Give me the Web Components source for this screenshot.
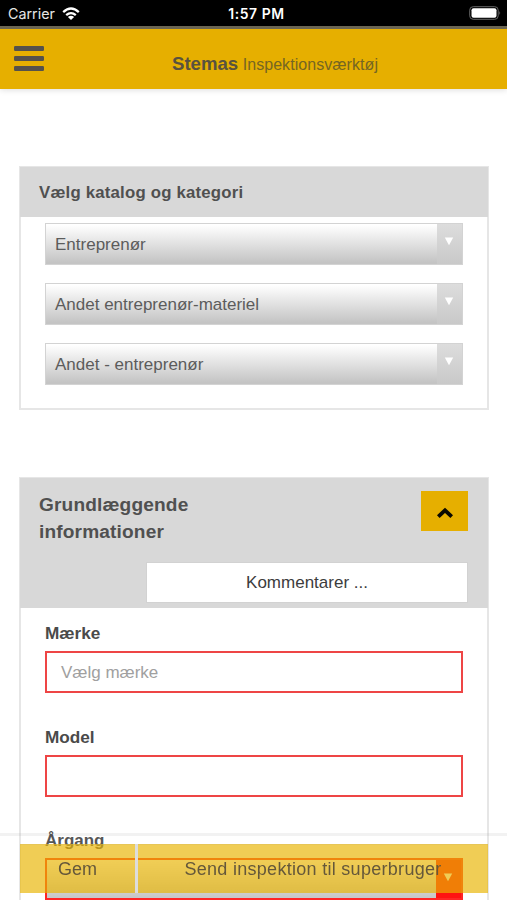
<!DOCTYPE html>
<html lang="da">
<head>
<meta charset="utf-8">
<title>Stemas Inspektionsværktøj</title>
<style>
html,body{margin:0;height:900px;overflow:hidden;background:#fff}
body{font-family:"Liberation Sans",Arial,sans-serif;color:#505050}
</style>
</head>
<body>
<inspection-app></inspection-app>
<script>
const define = (name, html) => customElements.define(name, class extends HTMLElement {
  constructor() {
    super();
    const t = document.createElement('template');
    t.innerHTML = html;
    this.attachShadow({ mode: 'open' }).append(t.content.cloneNode(true));
  }
});

define('status-bar', `<style>
:host{display:grid;grid-template-columns:1fr auto 1fr;align-items:center;height:26px;padding:2px 6px 0 8px;box-sizing:border-box;background:#000;color:#fff;font-size:14.300px;font-family:Inter,sans-serif;line-height:24px}
.l{display:flex;align-items:center;gap:7px;color:#e6e6e6}
b{font-weight:600;font-size:13.900px;letter-spacing:.6px;margin-left:4px}
.r{justify-self:end;display:flex}
svg{display:block}
.l svg{margin-top:-1px}
.r svg{margin-top:-2px}
</style>
<div class="l"><span>Carrier</span><svg width="18" height="14" viewBox="0 0 18 14" fill="none" stroke="#fff" stroke-width="2.3"><path d="M1.2 5.1Q9-2 16.800 5.100M4.200 8.200Q9 4 13.800 8.200"/><path d="M9 13 5.900 10Q9 7.600 12.100 10Z" fill="#fff" stroke="none"/></svg></div>
<b>1:57 PM</b>
<div class="r"><svg width="32" height="14" viewBox="0 0 32 14"><rect x=".7" y=".7" width="28.500" height="12.600" rx="3.500" fill="none" stroke="#666"/><rect x="2.500" y="2.300" width="25" height="9.400" rx="2" fill="#fff"/><path d="M30.500 5q1.400 2 0 4Z" fill="#888"/></svg></div>`);

define('app-header', `<style>
:host{display:flex;box-sizing:border-box;height:63px;border-top:3px solid #6b6552;background:#e6af00;box-shadow:0 1px 6px #0002;padding-left:14px;color:#5b5443}
svg{display:block;margin-top:17px}
.t{margin:24px 0 0 128px;line-height:22px;font-size:16px;white-space:nowrap;color:#756623;letter-spacing:.06px}
b{font-size:18.600px;color:#59523f;letter-spacing:0}
</style>
<svg width="30" height="26" fill="#55514b"><rect y="0" width="30" height="5" rx="1.200"/><rect y="10" width="30" height="5" rx="1.200"/><rect y="20" width="30" height="5" rx="1.200"/></svg>
<div class="t"><b><slot name="brand"></slot></b> <slot></slot></div>`);

define('form-panel', `<style>
:host{display:block;box-sizing:border-box;border:2px solid #e6e6e6;border-top-width:1px;margin:0 18px 0 19px}
header{display:block;background:#d8d8d8;margin:0 -1px}
</style>
<header><slot name="head"></slot></header><slot></slot>`);

define('select-box', `<style>
:host{display:flex;box-sizing:border-box;height:42px;border:1px solid #d3d3d3;background:linear-gradient(#fff 2%,#f4f4f4 20%,#c4c4c4 96%);font-size:17px;line-height:41px;color:#5c5c5c;--arrow:linear-gradient(#ddd,#c9c9c9);--tip:13px}
:host([invalid]){border:2px solid #ff1515;--arrow:#f00;--tip:13px}
.v{flex:1;padding-left:9px}
.a{width:25px;background:var(--arrow);display:flex;justify-content:center;padding-top:var(--tip);box-sizing:border-box}
svg{display:block;margin-right:1px}
</style>
<div class="v"><slot></slot></div><div class="a"><svg width="10" height="9"><path d="M.8.500h8.400L5 8.300Z" fill="#fff"/></svg></div>`);

define('text-field', `<style>
:host{display:block;height:104px}
label{display:block;height:28px;line-height:20px;font-weight:700;font-size:17.200px;color:#4a4a4a}
.i{height:42px;box-sizing:border-box;border:2px solid #ee4545;padding-left:14px;line-height:39px;font-size:17px;color:#a0a0a0;background:#fff}
</style>
<label><slot name="label"></slot></label><div class="i"><slot></slot></div>`);

define('comment-button', `<style>
:host{display:block;box-sizing:border-box;width:322px;height:41px;border:1px solid #d2d2d2;background:#fff;color:#3c3c3c;text-align:center;font-size:17px;line-height:40px}
</style><slot></slot>`);

define('collapse-button', `<style>
:host{display:flex;width:47px;height:40px;align-items:center;justify-content:center;background:#e6af00}
svg{display:block;margin-top:3px}
</style><svg width="18" height="12"><path d="M2.300 9.700 9 3.300 15.700 9.700" fill="none" stroke="#0b0900" stroke-width="3.800"/></svg>`);

define('action-bar', `<style>
:host{position:fixed;left:0;right:0;bottom:0;height:67px;box-sizing:border-box;border-top:3px solid #0000000d;padding:8px 19px 0 20px;background:#ffffff12}
.g{display:grid;grid-template-columns:115px 1fr;gap:3px;height:49px;font-size:18px;line-height:49px;text-align:center;color:#65583a}
.g{background:linear-gradient(90deg,transparent 115px,#ddd 115px 118px,transparent 118px)}
.g>div{height:49px;background:#e9b400aa;border-top:1px solid #d6b75a55;box-sizing:border-box;white-space:nowrap}
.send{letter-spacing:.29px}
</style><div class="g"><div><slot name="save"></slot></div><div class="send"><slot name="send"></slot></div></div>`);

define('inspection-app', `<style>
:host{display:block;height:900px;overflow:hidden}
.cat{margin-top:77px;height:244px}
.h1{display:block;height:50px;padding-left:19px;line-height:51px;font-weight:700;font-size:16.800px;letter-spacing:.2px}
.list{display:flex;flex-direction:column;gap:18px;padding:6px 24px 0}
.info{margin-top:67px;height:500px}
.h2{display:flex;flex-wrap:wrap;justify-content:space-between;height:130px;box-sizing:border-box;padding:13px 20px 5px 19px;align-content:space-between}
h2{margin:0;width:200px;font-size:19.100px;letter-spacing:.15px;line-height:27px;font-weight:700}
comment-button{margin-left:auto}
.fields{padding:15px 24px 0}
.lab{height:27px;line-height:20px;font-weight:700;font-size:17px;color:#4a4a4a}
</style>
<status-bar></status-bar>
<app-header><span slot="brand">Stemas</span>Inspektionsværktøj</app-header>
<form-panel class="cat"><div slot="head" class="h1">Vælg katalog og kategori</div>
<div class="list"><select-box>Entreprenør</select-box><select-box>Andet entreprenør-materiel</select-box><select-box>Andet - entreprenør</select-box></div></form-panel>
<form-panel class="info"><div slot="head" class="h2"><h2>Grundlæggende informationer</h2><collapse-button></collapse-button><comment-button>Kommentarer ...</comment-button></div>
<div class="fields"><text-field><span slot="label">Mærke</span>Vælg mærke</text-field><text-field><span slot="label">Model</span></text-field>
<div class="lab">Årgang</div><select-box invalid></select-box></div></form-panel>
<action-bar><span slot="save">Gem</span><span slot="send">Send inspektion til superbruger</span></action-bar>`);
</script>
</body>
</html>
